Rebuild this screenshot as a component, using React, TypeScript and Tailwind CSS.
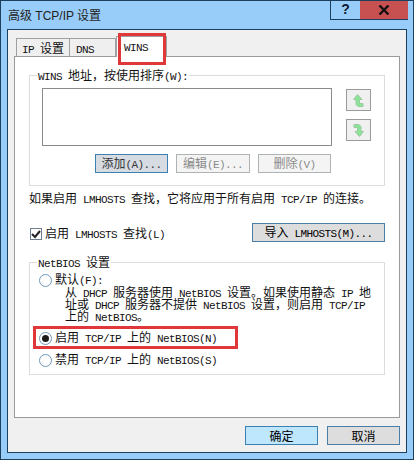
const isLatin = /([\x20-\x7e]+)/;

// SimSun-ish mix: half width latin, full width CJK
function T({ s }: { s: string }) {
  return (
    <>
      {s.split(isLatin).map((part, i) =>
        isLatin.test(part) ? (
          <span key={i} className="font-['Liberation_Mono',monospace] text-[11px] tracking-[-0.6px] whitespace-pre">
            {part}
          </span>
        ) : (
          <span key={i}>{part}</span>
        )
      )}
    </>
  );
}

function Btn({ label, kind, className }: { label: string; kind: "focus" | "normal" | "off" | "default"; className: string }) {
  const skins = {
    focus: "bg-[#d6dce2] border-[#3c7fb1] text-[#333]",
    normal: "bg-[#dddddd] border-[#4a7ea6] text-black",
    off: "bg-[#f4f4f4] border-[#adb2b5] text-[#8a8a8a]",
    default: "bg-[#bee6fd] border-[#3c7fb1] text-black",
  };
  return (
    <div className={`h-[19px] border flex items-center justify-center leading-none ${skins[kind]} ${className}`}>
      <span><T s={label} /></span>
    </div>
  );
}

function ArrowBtn({ down }: { down?: boolean }) {
  return (
    <div className="w-[25px] h-[22px] border border-[#9a9a9a] bg-[#f0f0f0] flex items-center justify-center">
      <svg width="11" height="13" viewBox="0 0 11 13" className={down ? "rotate-180" : ""}>
        <path
          d="M4.5 .5 L9 5.5 H6.5 V9.5 H10 V12.5 H5 L3 10.5 V5.5 H.5 Z"
          fill="#8be596"
          stroke="#9cc7a1"
          strokeWidth="1"
        />
      </svg>
    </div>
  );
}

function Radio({ on }: { on?: boolean }) {
  return (
    <div className="w-[13px] h-[13px] rounded-full border border-[#6f97b8] bg-white flex items-center justify-center shrink-0">
      {on && <div className="w-[7px] h-[7px] rounded-full bg-[#1a1a1a]" />}
    </div>
  );
}

export default function App() {
  return (
    <div className="relative w-[414px] h-[460px] overflow-hidden bg-[#99cdf9] border border-[#1c3f5e] flex flex-col text-[12px] text-[#111] font-['Noto_Sans_CJK_SC',sans-serif]">
      <div className="h-[28px] flex justify-between shrink-0">
        <div className="pl-[7px] pt-[6px] text-[12px] leading-[18px] text-[#222] font-['Liberation_Sans','Noto_Sans_CJK_SC',sans-serif] whitespace-pre">
          高级 TCP/IP 设置
        </div>
        <div className="flex h-[20px] mr-[5px] -mt-px">
          <div className="w-[30px] border-l border-b border-[#1c3f5e] flex items-center justify-center font-['Liberation_Sans',sans-serif] font-bold text-[14px] text-[#111a33]">
            ?
          </div>
          <div className="w-[48px] bg-[#c75050] border-b border-[#1c3f5e] flex items-center justify-center">
            <svg width="12" height="10" viewBox="0 0 12 10">
              <path d="M1.5 .5 L10.5 9.5 M10.5 .5 L1.5 9.5" stroke="#111" strokeWidth="2.4" />
            </svg>
          </div>
        </div>
      </div>

      <div className="mx-[6px] h-[424px] border border-[#1c3f5e] bg-[#f0f0f0] px-[6px] shrink-0">
        <div className="h-[27px] flex items-end pl-[2px] relative z-10">
          <div className="w-[54px] h-[18px] mb-px border border-b-0 border-[#a0a0a0] bg-[#efefef] pl-[5px] leading-[18px]">
            <T s="IP 设置" />
          </div>
          <div className="w-[46px] h-[18px] mb-px border border-l-0 border-b-0 border-[#a0a0a0] bg-[#efefef] pl-[6px] leading-[18px]">
            <T s="DNS" />
          </div>
          <div className="w-[51px] h-[21px] border border-b-0 border-[#a0a0a0] bg-white pl-[7px] leading-[17px]">
            <T s="WINS" />
          </div>
        </div>

        <div className="-mt-px h-[362px] border border-[#9a9a9a] bg-white px-[14px] pt-[11px]">
          <fieldset className="h-[118px] border border-[#dcdcdc] pl-[12px] pr-[13px] min-w-0">
            <legend className="-ml-[5px] px-[1px] bg-white h-[14px] leading-[14px]">
              <T s="WINS 地址，按使用排序(W):" />
            </legend>
            <div className="flex mt-[6px]">
              <div className="w-[290px] h-[58px] border border-[#8a8a8a] bg-white" />
              <div className="ml-[14px] mt-px flex flex-col gap-[8px]">
                <ArrowBtn />
                <ArrowBtn down />
              </div>
            </div>
            <div className="flex mt-[8px] pl-[53px] gap-[8px]">
              <Btn label="添加(A)..." kind="focus" className="w-[73px]" />
              <Btn label="编辑(E)..." kind="off" className="w-[74px]" />
              <Btn label="删除(V)" kind="off" className="w-[73px]" />
            </div>
          </fieldset>

          <div className="mt-[5px] h-[14px] leading-[14px] whitespace-pre">
            <T s="如果启用 LMHOSTS 查找，它将应用于所有启用 TCP/IP 的连接。" />
          </div>

          <div className="mt-[18px] h-[19px] flex justify-between items-center">
            <div className="flex items-center gap-[3px] pl-px mt-[2px]">
              <div className="w-[12px] h-[12px] border border-[#6f7f8f] bg-white flex items-center justify-center">
                <svg width="10" height="10" viewBox="0 0 10 10">
                  <path d="M1 5 L4 8 L9 2" fill="none" stroke="#222" strokeWidth="2" />
                </svg>
              </div>
              <span><T s="启用 LMHOSTS 查找(L)" /></span>
            </div>
            <Btn label="导入 LMHOSTS(M)..." kind="normal" className="w-[133px]" />
          </div>

          <fieldset className="mt-[13px] h-[120px] border border-[#dcdcdc] pl-[9px] min-w-0">
            <legend className="-ml-[2px] px-[1px] bg-white h-[14px] leading-[14px]">
              <T s="NetBIOS 设置" />
            </legend>
            <div className="flex items-center gap-[3px] mt-[4px] h-[14px] leading-none">
              <Radio />
              <span><T s="默认(F):" /></span>
            </div>
            <div className="ml-[26px] -mt-px whitespace-pre">
              <div className="h-[12px] leading-[12px]"><T s="从 DHCP 服务器使用 NetBIOS 设置。如果使用静态 IP 地" /></div>
              <div className="h-[12px] leading-[12px]"><T s="址或 DHCP 服务器不提供 NetBIOS 设置，则启用 TCP/IP" /></div>
              <div className="h-[12px] leading-[12px]"><T s="上的 NetBIOS。" /></div>
            </div>
            <div className="flex items-center gap-[3px] mt-[9px] h-[14px] leading-none">
              <Radio on />
              <span><T s="启用 TCP/IP 上的 NetBIOS(N)" /></span>
            </div>
            <div className="flex items-center gap-[3px] mt-[8px] h-[14px] leading-none">
              <Radio />
              <span><T s="禁用 TCP/IP 上的 NetBIOS(S)" /></span>
            </div>
          </fieldset>
        </div>

        <div className="flex justify-end gap-[9px] mt-[8px]">
          <Btn label="确定" kind="default" className="w-[73px]" />
          <Btn label="取消" kind="normal" className="w-[73px]" />
        </div>
      </div>

      {/* red annotation boxes */}
      <div className="absolute left-[117px] top-[32px] w-[48px] h-[32px] border-[3px] border-[#e0383a] z-20" />
      <div className="absolute left-[32px] top-[325px] w-[205px] h-[23px] border-[3px] border-[#e0383a] z-20" />
    </div>
  );
}
